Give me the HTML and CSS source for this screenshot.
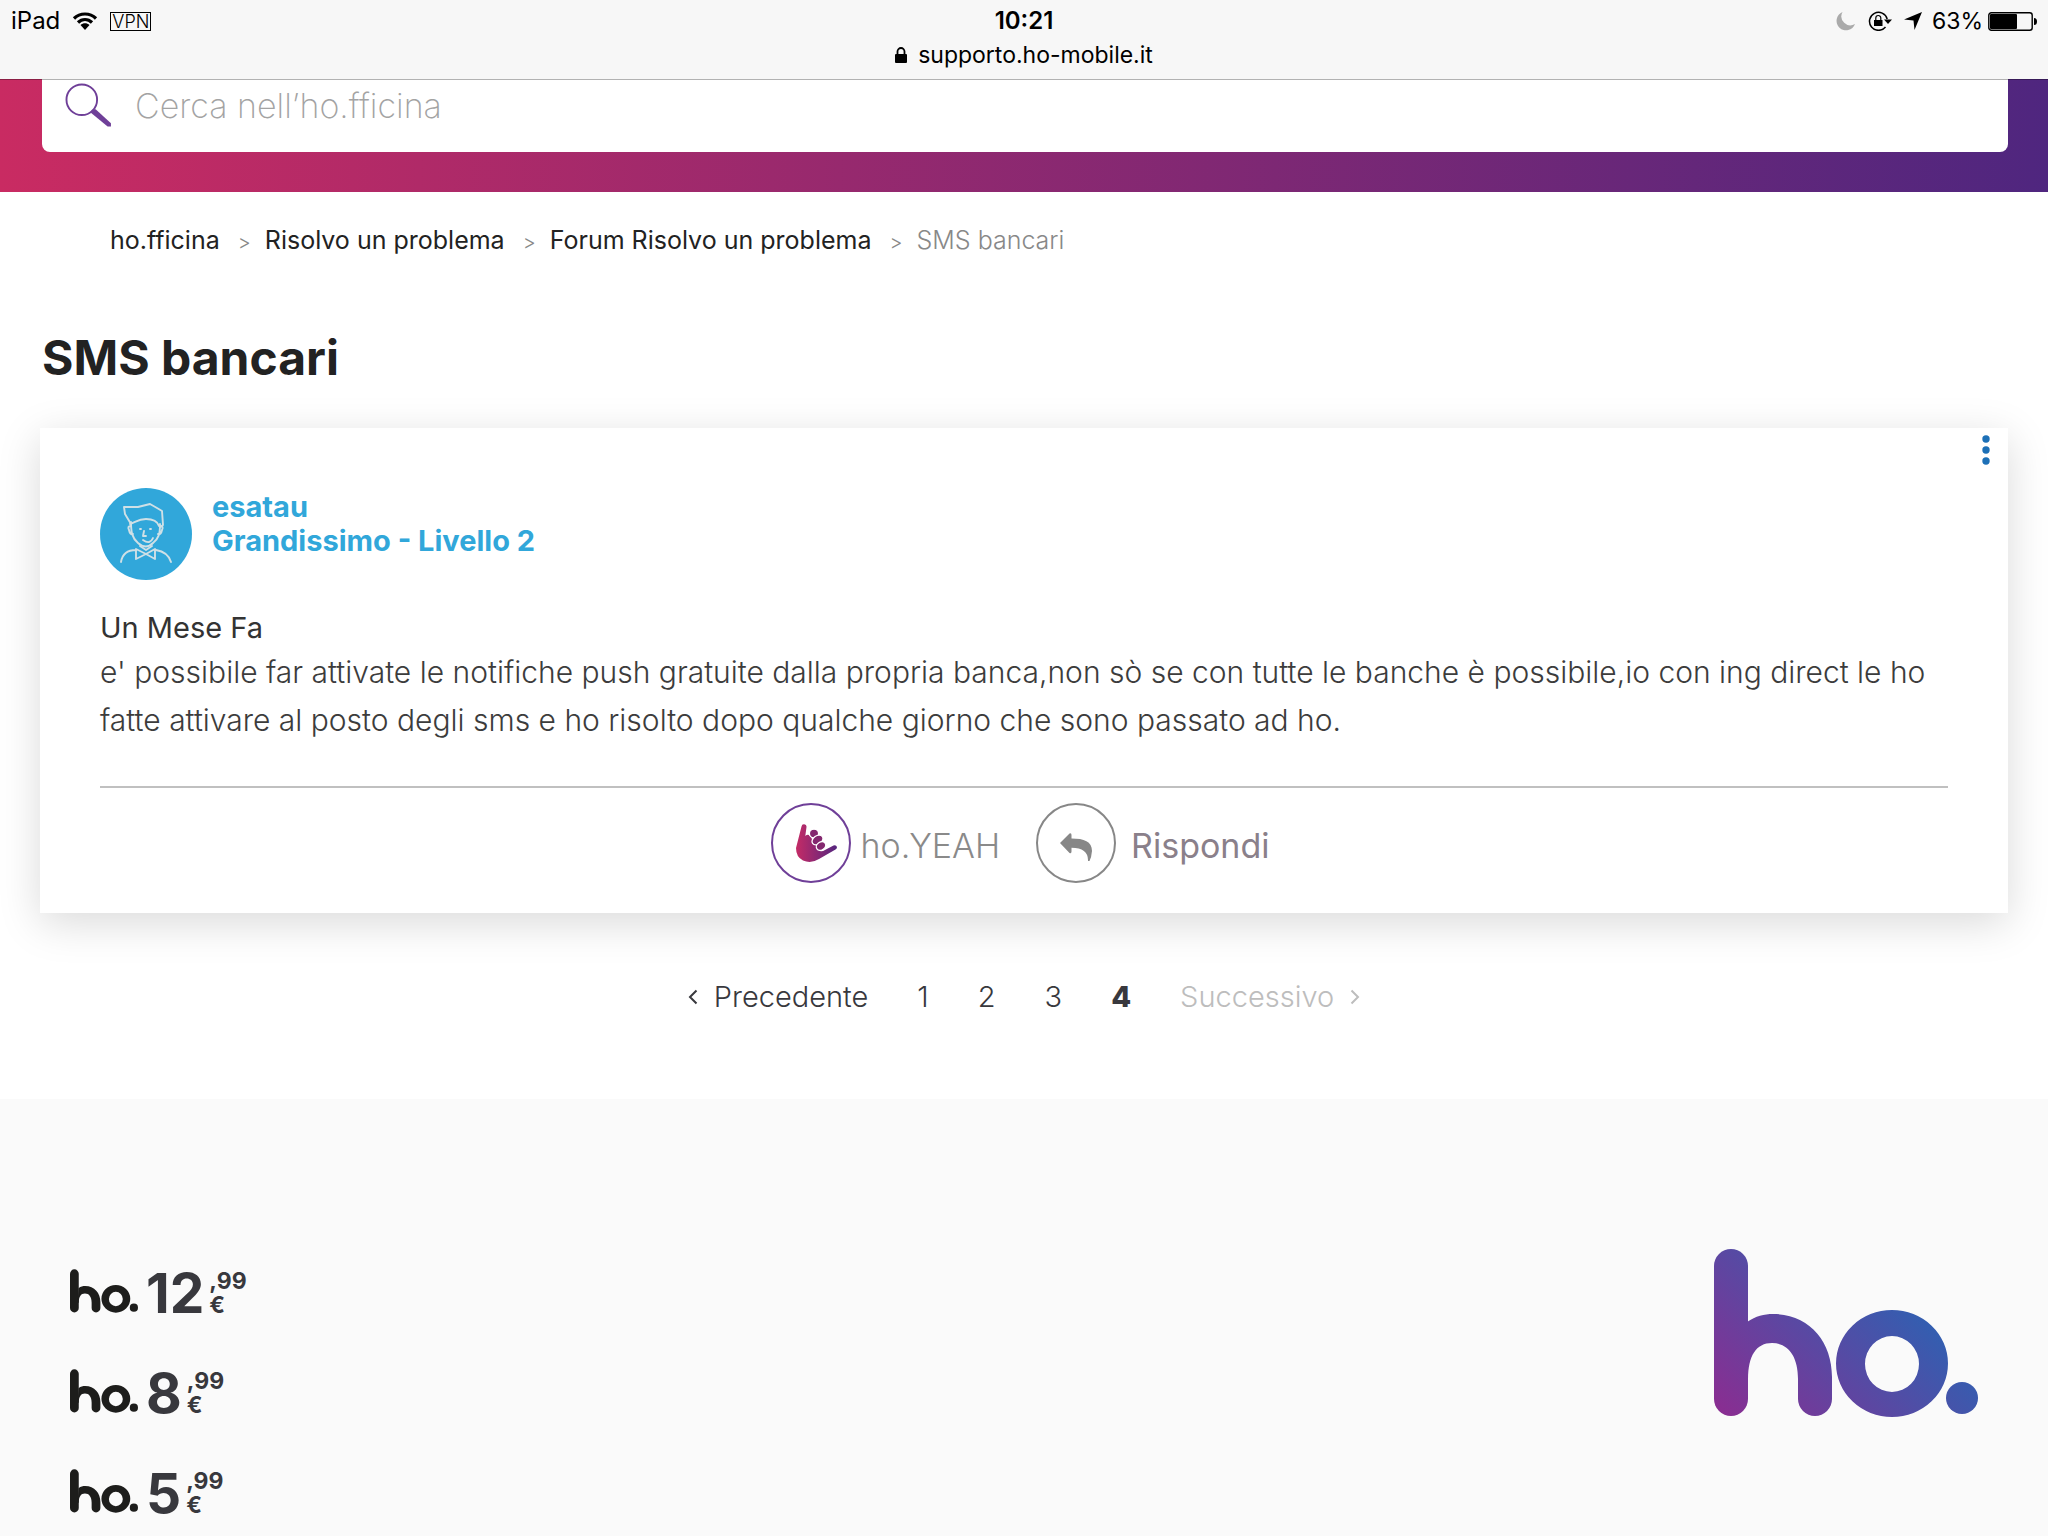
FILE: index.html
```html
<!DOCTYPE html>
<html lang="it">
<head>
<meta charset="utf-8">
<meta name="viewport" content="width=device-width, initial-scale=1">
<title>SMS bancari - ho.fficina</title>
<link rel="stylesheet" href="styles.css">
</head>
<body>
<svg class="defs" aria-hidden="true">
  <symbol id="ho-logo" viewBox="0 0 264 168">
    <rect x="0" y="0" width="34" height="167" rx="17"/>
    <path d="M33 73C42 67 50 65 59 65C95 65 118 92 118 128V150a17 17 0 0 1-34 0V130C84 107 74 94 58 94C42 94 34 107 34 130H30Z"/>
    <path fill-rule="evenodd" d="M178 61a56 53.500 0 0 1 0 107a56 53.500 0 0 1 0-107ZM178 87a27 28 0 0 0 0 56a27 28 0 0 0 0-56Z"/>
    <circle cx="248" cy="149" r="16"/>
  </symbol>
</svg>

<header class="status">
  <div class="status-side">
    <span>iPad</span>
    <svg class="wifi" viewBox="0 0 26 18" aria-hidden="true">
      <path d="M2 6.500C8 .500 18 .500 24 6.500M6 10.500C10 6.500 16 6.500 20 10.500" fill="none" stroke="#000" stroke-width="3.200"/>
      <path d="M8.500 13C11 10.800 15 10.800 17.500 13L13 18Z"/>
    </svg>
    <span class="vpn">VPN</span>
  </div>
  <div class="status-center">
    <time class="clock">10:21</time>
    <div class="address">
      <svg class="lock" viewBox="0 0 12 17" aria-hidden="true"><rect y="7" width="12" height="9" rx="1"/><path d="M2.500 8V4.500a3.500 3.500 0 0 1 7 0V8" fill="none" stroke="#000" stroke-width="1.800"/></svg>
      <span>supporto.ho-mobile.it</span>
    </div>
  </div>
  <div class="status-side status-right">
    <svg class="moon" viewBox="0 0 20 20" aria-hidden="true"><path d="M6.500 1A9.500 9.500 0 1 0 19 13A9 9 0 0 1 6.500 1Z" fill="#aaa"/></svg>
    <svg class="rotation" viewBox="0 0 24 20" aria-hidden="true">
      <path d="M17.500 16A9 9 0 1 1 19.200 8" fill="none" stroke="#000" stroke-width="1.500"/>
      <path d="M16 8.500h8L20 13Z"/><rect x="6" y="9" width="8.500" height="6"/>
      <path d="M7.800 9.500V7a2.500 2.500 0 0 1 5 0v2.500" fill="none" stroke="#000" stroke-width="1.200"/>
    </svg>
    <svg class="arrow" viewBox="0 0 18 18" aria-hidden="true"><path d="M18 0L10.500 18L9.500 8.500L0 7.500Z"/></svg>
    <span class="charge">63%</span>
    <svg class="battery" viewBox="0 0 49 19" aria-hidden="true">
      <rect x=".8" y=".8" width="43.400" height="17.400" rx="2.500" fill="none" stroke="#000" stroke-width="1.400"/>
      <rect x="2" y="2" width="27" height="15" rx="1"/><path d="M46 6q3 0 3 3.500t-3 3.500Z"/>
    </svg>
  </div>
</header>

<div class="banner">
  <form class="search" role="search">
    <label for="q" aria-label="Cerca">
      <svg class="lens" viewBox="0 0 48 46" aria-hidden="true"><circle cx="17.500" cy="17.500" r="16" fill="none" stroke="#6f3f98" stroke-width="2"/><path d="M28 28L32 27.500L48 42V45.500H44.500L27 31Z" fill="#6f3f98"/></svg>
    </label>
    <input id="q" type="search" placeholder="Cerca nell’ho.fficina">
  </form>
</div>

<main class="content">
  <nav aria-label="Percorso">
    <ol class="crumbs">
      <li><a href="#">ho.fficina</a></li>
      <li><a href="#">Risolvo un problema</a></li>
      <li><a href="#">Forum Risolvo un problema</a></li>
      <li class="current">SMS bancari</li>
    </ol>
  </nav>
  <h1>SMS bancari</h1>

  <article class="post">
    <button class="more" type="button" aria-label="Opzioni"><svg viewBox="0 0 8 30" aria-hidden="true"><circle cx="4" cy="4" r="3.700"/><circle cx="4" cy="15" r="3.700"/><circle cx="4" cy="26" r="3.700"/></svg></button>
    <div class="author">
      <svg class="avatar" viewBox="0 0 92 92" aria-hidden="true">
        <circle cx="46" cy="46" r="46" fill="#31a7da"/>
        <g fill="none" stroke="#cfe0e6" stroke-width="1.900" stroke-linejoin="round" stroke-linecap="round">
          <path d="M31 36L25 26L24 19L38 19L50 16L57 20L62 23L63 37L60 39M30 36C36 34 38 31 46 31C52 31 57 32 59 38"/>
          <path d="M31 34C31 44 32 50 38 55Q46 62 53 55C59 50 60 46 60 36M31 38Q27 38 29 42Q30 47 33 46M60 38Q64 38 62 42Q61 47 58 46"/>
          <path d="M40 41h1M50 41h1M44 43L43 48H46M43 52Q50 57 53 50"/>
          <path d="M36 61L46 66L55 61V71L46 66L36 71ZM40 58L46 62L52 58M36 62Q23 62 21 74M56 62Q68 64 71 74"/>
        </g>
      </svg>
      <div class="who"><a href="#">esatau</a><span>Grandissimo - Livello 2</span></div>
    </div>
    <div class="date">Un Mese Fa</div>
    <p class="message">e' possibile far attivate le notifiche push gratuite dalla propria banca,non sò se con tutte le banche è possibile,io con ing direct le ho fatte attivare al posto degli sms e ho risolto dopo qualche giorno che sono passato ad ho.</p>
    <div class="actions">
      <button class="action yeah" type="button">
        <span class="ring"><svg class="shaka" viewBox="0 0 41 38" aria-hidden="true">
          <defs><linearGradient id="hand"><stop offset="0" stop-color="#c42b66"/><stop offset="1" stop-color="#55257f"/></linearGradient></defs>
          <path fill="url(#hand)" d="M5.500 2.500a2.500 2.500 0 0 1 5 .5L9.300 12Q12 9.500 14 12L24 27Q26 28 29 26L37.500 21.500Q40 20.500 41 23Q41 24.500 39.500 25.500L23 35Q15 40 7 36.500Q0 33 0 24Z"/>
          <g fill="#84286f" stroke="#fff" stroke-width="1.300"><ellipse cx="18" cy="9.500" rx="4.600" ry="4.300"/><ellipse cx="21.500" cy="16" rx="6" ry="4.300" transform="rotate(-35 21.500 16)"/><ellipse cx="25" cy="22" rx="5" ry="3.900" transform="rotate(-35 25 22)"/></g>
        </svg></span>
        <span class="action-label">ho.YEAH</span>
      </button>
      <button class="action reply" type="button">
        <span class="ring"><svg class="reply-icon" viewBox="0 0 32 28" aria-hidden="true"><path fill="#878787" d="M0 10L9.500.5Q11.500-.5 11.500 2V5.500C24 5.500 32 8.500 32 18Q31.500 24 29.500 28H28Q28.500 15 11.500 14.800V18.500Q11.500 21 9.500 20Z"/></svg></span>
        <span class="action-label">Rispondi</span>
      </button>
    </div>
  </article>

  <nav class="pager" aria-label="Pagine">
    <a class="step" href="#"><svg viewBox="0 0 10 16" aria-hidden="true"><path d="M8.500 1.500L2 8L8.500 14.500"/></svg>Precedente</a>
    <a href="#">1</a>
    <a href="#">2</a>
    <a href="#">3</a>
    <b aria-current="page">4</b>
    <span class="step off">Successivo<svg viewBox="0 0 10 16" aria-hidden="true"><path d="M1.500 1.500L8 8L1.500 14.500"/></svg></span>
  </nav>
</main>

<footer class="footer">
  <ul class="plans">
    <li><a href="#"><svg class="mark" role="img" aria-label="ho."><use href="#ho-logo"/></svg><span class="euros">12</span><span class="cents"><span>,99</span><span>€</span></span></a></li>
    <li><a href="#"><svg class="mark" role="img" aria-label="ho."><use href="#ho-logo"/></svg><span class="euros">8</span><span class="cents"><span>,99</span><span>€</span></span></a></li>
    <li><a href="#"><svg class="mark" role="img" aria-label="ho."><use href="#ho-logo"/></svg><span class="euros">5</span><span class="cents"><span>,99</span><span>€</span></span></a></li>
  </ul>
  <svg class="brand" viewBox="0 0 264 168" role="img" aria-label="ho.">
    <defs><linearGradient id="brand" gradientUnits="userSpaceOnUse" x1="0" y1="160" x2="163" y2="-3"><stop offset="0" stop-color="#8a2d91"/><stop offset="1" stop-color="#2c62b3"/></linearGradient></defs>
    <use href="#ho-logo" width="264" height="168" fill="url(#brand)"/>
  </svg>
</footer>
</body>
</html>
```
FILE: styles.css
```css
* { box-sizing: border-box; }

body {
  margin: 0;
  font-family: Inter, "Liberation Sans", sans-serif;
  font-size: 29px;
  font-weight: 300;
  color: #333;
  background: #fff;
}

a { color: inherit; text-decoration: none; }

button {
  padding: 0;
  border: 0;
  background: none;
  font: inherit;
  color: inherit;
  cursor: pointer;
}

ol, ul { margin: 0; padding: 0; list-style: none; }

svg { display: block; flex: none; }

.defs { position: absolute; width: 0; height: 0; }

/* Browser status bar */
.status {
  position: relative;
  z-index: 1;
  display: grid;
  grid-template-columns: 1fr auto 1fr;
  height: 79px;
  padding: 4px 11px 0;
  background: #f7f7f7;
  box-shadow: 0 1px rgba(0, 0, 0, .3);
  color: #000;
  font-size: 24px;
  font-weight: 400;
  line-height: 34px;
}

.status-side { display: flex; align-items: center; height: 34px; }
.status-right { justify-content: flex-end; }
.status-center { text-align: center; }

.wifi { width: 26px; height: 18px; margin: 0 12px; }
.vpn { border: 1px solid #000; padding: 0 1px; font-size: 18px; font-weight: 300; line-height: 17px; }
.clock { display: block; font-weight: 600; }
.address { display: flex; align-items: center; gap: 11px; font-size: 23px; }
.lock { width: 12px; height: 17px; }

.moon { width: 20px; height: 20px; }
.rotation { width: 24px; height: 20px; margin-left: 12px; }
.arrow { width: 18px; height: 18px; margin-left: 12px; }
.charge { margin-left: 10px; font-size: 23px; }
.battery { width: 49px; height: 19px; margin-left: 5px; }

/* Search banner */
.banner {
  padding: 0 40px 40px 42px;
  background: linear-gradient(to right, #c92b62, #4f267f);
}

.search {
  display: flex;
  height: 73px;
  padding: 4px 23px 24px;
  border-radius: 0 0 8px 8px;
  background: #fff;
}

.lens { width: 46px; height: 44px; }

.search input {
  flex: 1;
  min-width: 0;
  margin-left: 24px;
  padding: 0;
  border: 0;
  outline: 0;
  background: none;
  font: 200 34px Inter, "Liberation Sans", sans-serif;
  color: #333;
}

.search input::placeholder { color: #a3a3a3; opacity: 1; }

/* Page content */
.content { padding: 32px 40px 82px; }

.crumbs {
  display: flex;
  padding-left: 70px;
  color: #222;
  font-size: 25px;
  font-weight: 400;
  line-height: 32px;
}

.crumbs li + li::before {
  content: ">";
  margin: 0 14px 0 18px;
  color: #888;
  font-size: 20px;
  font-weight: 300;
}

.crumbs .current { color: #888; font-weight: 300; }

h1 {
  margin: 70px 2px 40px;
  color: #222;
  font-size: 48px;
  font-weight: 700;
  line-height: 60px;
}

/* Post card */
.post {
  position: relative;
  padding: 60px 60px 30px;
  background: #fff;
  box-shadow: 0 10px 40px rgba(0, 0, 0, .15);
}

.more { position: absolute; top: 7px; right: 18px; }
.more svg { width: 8px; height: 30px; fill: #1d70b7; }

.author { display: flex; gap: 20px; }
.avatar { width: 92px; height: 92px; }

.who {
  display: flex;
  flex-direction: column;
  padding-top: 2px;
  color: #31a7da;
  font-weight: 700;
  line-height: 34px;
}

.date { margin-top: 28px; font-weight: 400; line-height: 40px; }

.message { margin: 0; color: #3c3c3c; font-size: 30px; line-height: 48px; }

.actions {
  display: flex;
  justify-content: center;
  gap: 36px;
  margin-top: 42px;
  padding: 15px 8px 0 0;
  border-top: 2px solid #c0c0c0;
}

.action { display: flex; align-items: center; color: #8a8a8a; font-size: 34px; }
.action-label { padding-top: 4px; }
.yeah { gap: 10px; }
.reply { gap: 15px; color: #8a808a; font-weight: 400; }

.ring {
  display: grid;
  place-content: center;
  width: 80px;
  height: 80px;
  border: 2px solid #878787;
  border-radius: 50%;
}

.yeah .ring { border-color: #6f3f98; padding-left: 12px; }
.shaka { width: 41px; height: 38px; }
.reply-icon { width: 32px; height: 28px; margin-top: 8px; }

/* Pagination */
.pager {
  display: flex;
  justify-content: center;
  align-items: center;
  gap: 49px;
  margin-top: 64px;
  color: #38383d;
  line-height: 40px;
}

.pager b { font-weight: 800; }
.step { display: flex; align-items: center; gap: 16px; }
.step svg { width: 10px; height: 16px; fill: none; stroke: currentColor; stroke-width: 2; }
.step.off { color: #bdbdbd; }

/* Footer */
.footer {
  display: flex;
  justify-content: space-between;
  align-items: flex-start;
  min-height: 437px;
  padding: 150px 70px 0;
  background: #fafafa;
}

.plans { display: grid; gap: 36px; padding-top: 14px; }
.plans a { display: flex; height: 64px; color: #38383d; }
.mark { width: 68px; height: 44px; margin-top: 6px; fill: #1d1d1b; }

.euros { margin-left: 8px; font-size: 55px; font-weight: 700; line-height: 60px; }

.cents {
  display: flex;
  flex-direction: column;
  margin-left: 5px;
  font-size: 23px;
  font-weight: 700;
  line-height: 24px;
  padding-top: 6px;
}

.brand { width: 264px; height: 168px; }
```
